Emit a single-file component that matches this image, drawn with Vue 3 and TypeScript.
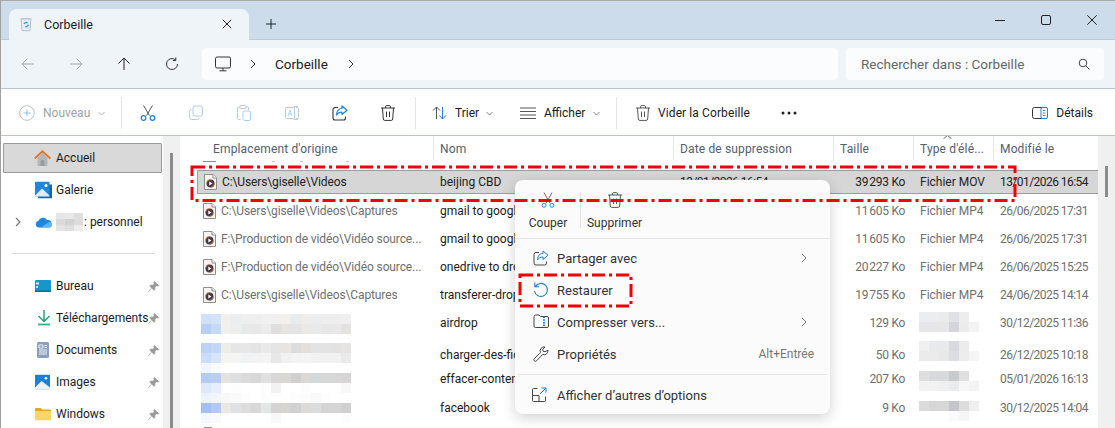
<script setup lang="ts">
interface Row { loc?: string; name: string; date: string; size: string; type?: string; mod: string; sel?: boolean }
const rows: Row[] = [
  { loc: 'C:\\Users\\giselle\\Videos', name: 'beijing CBD', date: '13/01/2026 16:54', size: '39\u202f293 Ko', type: 'Fichier MOV', mod: '13/01/2026 16:54', sel: true },
  { loc: 'C:\\Users\\giselle\\Videos\\Captures', name: 'gmail to google', date: '', size: '11\u202f605 Ko', type: 'Fichier MP4', mod: '26/06/2025 17:31' },
  { loc: 'F:\\Production de vidéo\\Vidéo source...', name: 'gmail to google', date: '', size: '11\u202f605 Ko', type: 'Fichier MP4', mod: '26/06/2025 17:31' },
  { loc: 'F:\\Production de vidéo\\Vidéo source...', name: 'onedrive to dropbox', date: '', size: '20\u202f227 Ko', type: 'Fichier MP4', mod: '26/06/2025 15:25' },
  { loc: 'C:\\Users\\giselle\\Videos\\Captures', name: 'transferer-dropbox', date: '', size: '19\u202f755 Ko', type: 'Fichier MP4', mod: '24/06/2025 14:14' },
  { name: 'airdrop', date: '', size: '129 Ko', mod: '30/12/2025 11:36' },
  { name: 'charger-des-fichiers', date: '', size: '50 Ko', mod: '26/12/2025 10:18' },
  { name: 'effacer-contenu', date: '', size: '207 Ko', mod: '05/01/2026 16:13' },
  { name: 'facebook', date: '', size: '9 Ko', mod: '30/12/2025 14:04' }
]
const w = '#ffffff'
const locBlur: { top: number; bands: string[][] }[] = [
  { top: 5, bands: [
    ['#cfe0f8','#d3e3f9','#f1f0ee','#ebedee','#efefef','#efefef','#f0f1f0','#f0f0f0','#f1f0ee','#e9ecec','#efedeb','#ecedee','#eeeeee','#eeeeee','#efefef'],
    ['#b7cff2','#c6d9f6','#f0f0ee','#eeeeee','#e8eae9','#e8e8e8','#ececec','#dfdfdf','#e5e4e2','#e4e4e4','#ebe9e7','#e9ebea','#e7e7e7','#e8e8e8','#e3e2e0'] ] },
  { top: 6, bands: [
    ['#bcd3f4','#c3d7f6','#ededeb','#e6e6e6','#e8e7e7','#e4e4e4','#e9e9e9','#e5e5e5','#e6e5e3','#dcdcdc','#e3dfdd','#e2e3e4','#e3e3e3','#e2e2e2','#e5e4e2'],
    ['#cadcf7','#d8e5f9','#f4f4f2','#f4f4f4','#f1f2f4','#f3f3f3','#f4f4f4','#e8e8e8','#f1f1f1','#f3f3f3','#f4f4f4','#f2f2f2','#f1f1f1','#f1f1f1','#eaeaea'],
    ['#f1f5fe','#f8fafe',w,w,w,w,w,w,w,w,w,w,w,w,w] ] },
  { top: 8, bands: [
    ['#b3ccf2','#b8cff3','#e4e3e0','#dddfe0','#dcdbdb','#d8d8d8','#e0e0e0','#d7d7d7','#d8d7d5','#d0d0d0','#dcd8d6','#d5d8d8','#d5d6d6','#d6d6d6','#d6d4d4'],
    ['#dee8fb','#e8effc',w,'#fdfdfd',w,w,'#fdfdfd','#f2f2f2',w,w,'#fdfdfd',w,w,w,'#f8f8f8'] ] },
  { top: 0, bands: [
    ['#edf3fa','#f2f6fb','#f8f8f8','#fafafa','#fdfdfd',w,'#fdfdfd','#fdfdfd',w,'#fdfdfd','#fcfcfc','#f9f9f9','#fdfdfd',w,w],
    ['#a3c1f0','#b2caf3','#e9e8e5','#dfe1e2','#dcdddd','#d8d8d8','#e3e6e4','#d3d3d3','#d5d4d2','#d0d0d0','#dcdad8','#dadcdc','#d4d4d4','#d4d4d4','#d0d0d0'],
    ['#f4f7fe','#f8faff',w,w,w,w,w,'#f8f8f8',w,w,w,w,w,w,'#fdfdfd'] ] }
]
const typeBlur: { top: number; bands: string[][] }[] = [
  { top: 3, bands: [['#ecedee','#ecedee','#ebebec','#dfe1e4','#ededed',w],['#e6e6e8','#e6e6e6','#e6e6e6','#d3d5d9','#ececec','#f3f3f3']] },
  { top: 4, bands: [['#f0f0f0','#e8e9ea','#e8e9ea','#d8dadd','#ececec',w],['#ebebeb','#ebebeb','#e8e8e8','#dcdee1','#ededed','#f5f5f5']] },
  { top: 6, bands: [['#dfdfe0','#d8d9da','#d8d9da','#c8cbce','#e0e0e0',w],['#f2f2f2','#f1f1f1','#efefef','#e9ebec','#f7f7f7','#f3f3f3']] },
  { top: 8, bands: [['#dbdbdc','#d6d6d7','#d6d6d7','#c2c5ca','#dcdcdc','#efefef'],[w,w,w,'#fafafa','#f5f5f5',w]] }
]
const oneDrive = ['#e6e6e6','#e8e8e8','#dedede','#dadada','#d2d2d2','#dcdcdc','#e4e4e4','#dedede','#ececec']
const pinned = [
  { label: 'Bureau', kind: 'desk' }, { label: 'Téléchargements', kind: 'dl' },
  { label: 'Documents', kind: 'doc' }, { label: 'Images', kind: 'img' }, { label: 'Windows', kind: 'folder' }
]
</script>

<template>
  <div class="win">
    <!-- tab bar -->
    <div class="tabbar">
      <div class="tab">
        <svg class="ti" width="16" height="16" viewBox="0 0 16 16"><path d="M3 2.500h10l-1 12.200H4z" fill="#e6edf2" stroke="#a9b4bc" stroke-width=".8"/><path d="M3 2.500h10v1.400H3z" fill="#c9d3da"/><path d="M6 8a2.300 2.300 0 0 1 3.600-1M10.300 8.600a2.300 2.300 0 0 1-3 2" fill="none" stroke="#2a9fd8" stroke-width="1.300"/></svg>
        <span class="tabtxt">Corbeille</span>
        <svg class="tabx" width="10" height="10" viewBox="0 0 10 10"><path d="M.8.800l8.400 8.400M9.200.8L.8 9.200" stroke="#222" stroke-width="1"/></svg>
      </div>
      <svg class="plus" width="10" height="10" viewBox="0 0 10 10"><path d="M5 0v10M0 5h10" stroke="#222" stroke-width="1"/></svg>
      <div class="wctrl">
        <svg width="10" height="10" viewBox="0 0 10 10"><path d="M0 5.500h10" stroke="#222" stroke-width="1"/></svg>
        <svg width="10" height="10" viewBox="0 0 10 10"><rect x=".5" y=".5" width="9" height="9" rx="1.500" fill="none" stroke="#222"/></svg>
        <svg width="10" height="10" viewBox="0 0 10 10"><path d="M.3.300l9.400 9.400M9.700.3L.3 9.700" stroke="#222" stroke-width="1"/></svg>
      </div>
    </div>
    <!-- nav -->
    <div class="nav">
      <div class="navbtn"><svg width="14" height="14" viewBox="0 0 14 14"><path d="M13 7H1M6.500 1.500L1 7l5.500 5.500" fill="none" stroke="#a0a6ab" stroke-width="1"/></svg></div>
      <div class="navbtn"><svg width="14" height="14" viewBox="0 0 14 14"><path d="M1 7h12M7.500 1.500L13 7l-5.500 5.500" fill="none" stroke="#a0a6ab" stroke-width="1"/></svg></div>
      <div class="navbtn"><svg width="14" height="14" viewBox="0 0 14 14"><path d="M7 13V1M1.500 6.500L7 1l5.500 5.500" fill="none" stroke="#222" stroke-width="1"/></svg></div>
      <div class="navbtn"><svg width="14" height="14" viewBox="0 0 14 14"><path d="M12.500 7A5.500 5.500 0 1 1 10.500 2.800M10.800 .5v3h-3" fill="none" stroke="#333" stroke-width="1"/></svg></div>
      <div class="addr">
        <svg class="mon" width="16" height="16" viewBox="0 0 16 16"><rect x=".5" y="1" width="15" height="11" rx="1.500" fill="none" stroke="#333"/><path d="M8 12v2.500M4.500 14.800h7" stroke="#333"/></svg>
        <svg class="chev1" width="6" height="10" viewBox="0 0 6 10"><path d="M1 1l4 4-4 4" fill="none" stroke="#333"/></svg>
        <span class="crumb">Corbeille</span>
        <svg class="chev2" width="6" height="10" viewBox="0 0 6 10"><path d="M1 1l4 4-4 4" fill="none" stroke="#333"/></svg>
      </div>
      <div class="search">
        <span>Rechercher dans : Corbeille</span>
        <svg width="12" height="12" viewBox="0 0 12 12"><circle cx="5" cy="5" r="3.800" fill="none" stroke="#444"/><path d="M7.800 7.800L11.500 11.500" stroke="#444"/></svg>
      </div>
    </div>
    <!-- toolbar -->
    <div class="tools">
      <div class="newbtn">
        <svg width="16" height="16" viewBox="0 0 16 16"><circle cx="8" cy="8" r="7.300" fill="none" stroke="#b9c0c6"/><path d="M8 4.500v7M4.500 8h7" stroke="#8fc1ea"/></svg>
        <span class="dis">Nouveau</span>
        <svg class="cv" width="7" height="5" viewBox="0 0 7 5"><path d="M.5 1l3 3 3-3" fill="none" stroke="#b5b5b5"/></svg>
      </div>
      <i class="vsep first"></i>
      <div class="ib"><svg width="16" height="16" viewBox="0 0 16 16"><path d="M3.500 .5l6 10M12.500 .5l-6 10" stroke="#555" fill="none"/><circle cx="3.500" cy="13" r="2.300" fill="none" stroke="#1f7fd6" stroke-width="1.200"/><circle cx="12.500" cy="13" r="2.300" fill="none" stroke="#1f7fd6" stroke-width="1.200"/></svg></div>
      <div class="ib"><svg width="16" height="16" viewBox="0 0 16 16"><rect x="5" y="1" width="9.500" height="10" rx="2" fill="none" stroke="#a9cfee"/><path d="M3.500 4.500A2 2 0 0 0 1.500 6.500v6a2 2 0 0 0 2 2h6a2 2 0 0 0 1.800-1.500" fill="none" stroke="#c3c8cc"/></svg></div>
      <div class="ib"><svg width="16" height="16" viewBox="0 0 16 16"><path d="M4.500 14.500h-2a1 1 0 0 1-1-1V3a1 1 0 0 1 1-1h9a1 1 0 0 1 1 1v2" fill="none" stroke="#c3c8cc"/><rect x="4" y=".5" width="6" height="3" rx="1" fill="#fff" stroke="#c3c8cc"/><rect x="7" y="6" width="7.500" height="9.500" rx="1.500" fill="#fff" stroke="#a9cfee"/></svg></div>
      <div class="ib"><svg width="16" height="14" viewBox="0 0 16 14"><path d="M9 1.500H2.500a1 1 0 0 0-1 1v9a1 1 0 0 0 1 1H9M12 1.500h1.500a1 1 0 0 1 1 1v9a1 1 0 0 1-1 1H12" fill="none" stroke="#c3c8cc"/><path d="M4 10l2-6 2 6M4.800 8h2.400M9 .5h5M9 13.500h5M10.500 .5v13" fill="none" stroke="#a9cfee" stroke-width=".9"/></svg></div>
      <div class="ib"><svg width="16" height="16" viewBox="0 0 16 16"><path d="M6 2.500H3a2 2 0 0 0-2 2v8.500a2 2 0 0 0 2 2h8.500a2 2 0 0 0 2-2v-1.500" fill="none" stroke="#333" stroke-width="1.100"/><path d="M10 1v2.500C6.500 3.500 4.800 5.800 4.500 10c1.500-2.300 3.200-3 5.500-3v2.500L15 5.200z" fill="none" stroke="#1f7fd6" stroke-width="1.200" stroke-linejoin="round"/></svg></div>
      <div class="ib"><svg width="14" height="16" viewBox="0 0 14 16"><path d="M0 3h14M4.500 3V1.800A1.200 1.200 0 0 1 5.700.6h2.600a1.200 1.200 0 0 1 1.200 1.200V3M1.500 3l.8 11a1.500 1.500 0 0 0 1.500 1.400h6.400a1.500 1.500 0 0 0 1.500-1.400l.8-11M5.500 6.500v5.500M8.500 6.500v5.500" fill="none" stroke="#333" stroke-width="1"/></svg></div>
      <i class="vsep second"></i>
      <div class="tb sort">
        <svg width="16" height="16" viewBox="0 0 16 16"><path d="M4.500 14V2M1 5.500L4.500 2 8 5.500" fill="none" stroke="#555"/><path d="M10.500 2v12M7.500 10.500l3 3.500 3.500-3.500" fill="none" stroke="#1f7fd6"/></svg>
        <span>Trier</span>
        <svg class="cv" width="7" height="5" viewBox="0 0 7 5"><path d="M.5 1l3 3 3-3" fill="none" stroke="#888"/></svg>
      </div>
      <div class="tb view">
        <svg width="16" height="12" viewBox="0 0 16 12"><path d="M0 1h16M0 4.500h16M0 8h16M0 11.500h16" stroke="#444" stroke-width=".9"/></svg>
        <span>Afficher</span>
        <svg class="cv" width="7" height="5" viewBox="0 0 7 5"><path d="M.5 1l3 3 3-3" fill="none" stroke="#888"/></svg>
      </div>
      <i class="vsep third"></i>
      <div class="tb empty">
        <svg width="14" height="16" viewBox="0 0 14 16"><path d="M0 3h14M4.500 3V1.800A1.200 1.200 0 0 1 5.700.6h2.600a1.200 1.200 0 0 1 1.200 1.200V3M1.500 3l.8 11a1.500 1.500 0 0 0 1.500 1.400h6.400a1.500 1.500 0 0 0 1.500-1.400l.8-11M5.500 6.500v5.500M8.500 6.500v5.500" fill="none" stroke="#444" stroke-width=".9"/></svg>
        <span>Vider la Corbeille</span>
      </div>
      <svg class="more" width="16" height="4" viewBox="0 0 16 4"><circle cx="2" cy="2" r="1.500" fill="#222"/><circle cx="8" cy="2" r="1.500" fill="#222"/><circle cx="14" cy="2" r="1.500" fill="#222"/></svg>
      <div class="tb det">
        <svg width="16" height="14" viewBox="0 0 16 14"><rect x=".5" y="1.500" width="15" height="11" rx="2" fill="none" stroke="#333"/><rect x="9" y="1.500" width="6.500" height="11" rx="1.500" fill="#fff" stroke="#1f7fd6"/><path d="M11 4.500h2.500M11 7h2.500M11 9.500h2.500" stroke="#1f7fd6" stroke-width=".9"/></svg>
        <span>Détails</span>
      </div>
    </div>
    <!-- body -->
    <div class="body">
      <aside class="side">
        <div class="sitem selected">
          <svg class="si" width="17" height="16" viewBox="0 0 17 16"><path d="M3.500 8v8h10V8l-5-5z" fill="#b4b6b8"/><path d="M6.500 16v-4a2 2 0 0 1 4 0v4z" fill="#97999c"/><path d="M.7 8.500L8.500 1.300l7.800 7.200" fill="none" stroke="#e0762a" stroke-width="1.800"/></svg>
          <span>Accueil</span>
        </div>
        <div class="sitem">
          <svg class="si" width="17" height="17" viewBox="0 0 17 17"><rect x="3" y="3" width="14" height="14" fill="#1565a8"/><rect x="0" y="0" width="14.500" height="15" rx="1" fill="#1f86d8"/><path d="M0 14l7-7 7.500 7v1H0z" fill="#dcebf7"/><circle cx="11" cy="4" r="1.500" fill="#fff"/></svg>
          <span>Galerie</span>
        </div>
        <div class="sitem">
          <svg class="exp" width="6" height="10" viewBox="0 0 6 10"><path d="M1 1l4 4-4 4" fill="none" stroke="#777" stroke-width="1.200"/></svg>
          <svg class="si od" width="17" height="12" viewBox="0 0 17 12"><path d="M4 11.500a3.400 3.400 0 0 1-.6-6.700A4.800 4.800 0 0 1 12 4a3.800 3.800 0 0 1 1.500 7.500z" fill="#1f86e0"/><path d="M6 11.500L14 6a3 3 0 0 1 1.500 5.500z" fill="#5cb5f5"/></svg>
          <div class="odblur"><i v-for="(c, i) in oneDrive" :key="i" :style="{ background: c }"></i></div>
          <span>: personnel</span>
        </div>
        <hr class="sdiv" />
        <div v-for="p in pinned" :key="p.label" class="sitem">
          <svg v-if="p.kind === 'desk'" class="si" width="16" height="12" viewBox="0 0 16 12"><rect width="16" height="12" rx="1" fill="#1797c9"/><rect x="1" y="2.500" width="3" height="2" fill="#d8f0fa"/><rect x="1" y="6" width="2" height="2" fill="#bde6f5"/><rect y="10.500" width="16" height="1.500" fill="#0d6c99"/></svg>
          <svg v-else-if="p.kind === 'dl'" class="si dl" width="14" height="16" viewBox="0 0 14 16"><path d="M7 0v11M1.500 6L7 11.500 12.500 6" fill="none" stroke="#1ea67f" stroke-width="1.500"/><path d="M1 14.500h12" stroke="#28b78c" stroke-width="1.800"/></svg>
          <svg v-else-if="p.kind === 'doc'" class="si dl" width="12" height="16" viewBox="0 0 12 16"><rect width="12" height="16" rx="1.500" fill="#8b9fbc"/><path d="M2 3h4v3H2zM7.500 3.500H10M7.500 5.500H10M2 8h8M2 10h8M2 12h8" stroke="#eef2f8" fill="none"/></svg>
          <svg v-else-if="p.kind === 'img'" class="si" width="15" height="15" viewBox="0 0 15 15"><rect width="15" height="15" rx="1" fill="#1f7fd0"/><path d="M0 13l6.500-6.500L15 13v2H0z" fill="#e7f2fb"/><circle cx="11" cy="3.800" r="1.300" fill="#fff"/></svg>
          <svg v-else class="si" width="16" height="13" viewBox="0 0 16 13"><path d="M0 1.500A1 1 0 0 1 1 .5h4.500L7.500 2H15a1 1 0 0 1 1 1v1H0z" fill="#e8a80f"/><path d="M0 3.500h16V12a1 1 0 0 1-1 1H1a1 1 0 0 1-1-1z" fill="#fbd568"/></svg>
          <span>{{ p.label }}</span>
          <svg class="pin" width="11" height="11" viewBox="0 0 11 11"><path d="M6.500.5l4 4-1.200.6-.8-.4L6.800 6.500 7 8.300 6 9.300 1.700 5 2.700 4l1.800.2L6.300 2.500l-.4-.8zM3 7.500L.5 10.500" fill="#9a9a9a" stroke="#9a9a9a" stroke-width=".8"/></svg>
        </div>
      </aside>
      <div class="sidebar-scroll"><b></b></div>
      <main class="list">
        <div class="head">
          <span class="hcell first">Emplacement d'origine</span>
          <span class="hcell">Nom</span>
          <span class="hcell">Date de suppression</span>
          <span class="hcell">Taille</span>
          <span class="hcell sorted">Type d'élé...<svg class="caret" width="9" height="4" viewBox="0 0 9 4"><path d="M.5 3.800L4.500.5l4 3.300" fill="none" stroke="#666"/></svg></span>
          <span class="hcell">Modifié le</span>
        </div>
        <div class="ghost"><i class="g1"></i><i class="g2"></i><i class="g3"></i><i class="g4"></i></div>
        <div v-for="(r, i) in rows" :key="i" class="row" :class="{ sel: r.sel }">
          <div class="cell c0">
            <template v-if="r.loc">
              <svg class="file" width="13" height="16" viewBox="0 0 13 16"><path d="M.5.500h8.500l3.500 3.500v11.500H.5z" fill="#f6f4f4" stroke="#8c8c8c"/><path d="M9 .5V4h3.500" fill="#fff" stroke="#8c8c8c"/><circle cx="6.500" cy="9.500" r="4" fill="#4a3748"/><circle cx="6.500" cy="9.500" r="4" fill="none" stroke="#d98b2a" stroke-width=".8" stroke-dasharray="6 7"/><path d="M5.300 7.600l3.200 1.900-3.200 1.900z" fill="#fff"/></svg>
              <span class="tx">{{ r.loc }}</span>
            </template>
            <div v-else class="blur" :style="{ marginTop: locBlur[i - 5].top + 'px' }">
              <div v-for="(b, j) in locBlur[i - 5].bands" :key="j" class="band"><i v-for="(c, k) in b" :key="k" :style="{ background: c }"></i></div>
            </div>
          </div>
          <div class="cell c1"><span>{{ r.name }}</span></div>
          <div class="cell c2"><span class="tx">{{ r.date }}</span></div>
          <div class="cell c3"><span class="tx">{{ r.size }}</span></div>
          <div class="cell c4">
            <span v-if="r.type" class="tx">{{ r.type }}</span>
            <div v-else class="blur" :style="{ marginTop: typeBlur[i - 5].top + 'px' }">
              <div v-for="(b, j) in typeBlur[i - 5].bands" :key="j" class="band"><i v-for="(c, k) in b" :key="k" :style="{ background: c }"></i></div>
            </div>
          </div>
          <div class="cell c5"><span class="tx">{{ r.mod }}</span></div>
        </div>
        <i class="nextblue"></i>
      </main>
      <div class="vscroll"><b></b></div>
    </div>

    <!-- context menu -->
    <div class="menu">
      <div class="mtop">
        <div class="mbtn couper">
          <svg width="14" height="16" viewBox="0 0 16 18"><path d="M3.500 .5l6.500 12M12.500 .5l-6.500 12" stroke="#555" fill="none"/><circle cx="3.500" cy="15" r="2.300" fill="none" stroke="#1f7fd6" stroke-width="1.100"/><circle cx="12.500" cy="15" r="2.300" fill="none" stroke="#1f7fd6" stroke-width="1.100"/></svg>
          <span>Couper</span>
        </div>
        <i class="msep"></i>
        <div class="mbtn suppr">
          <svg width="14" height="16" viewBox="0 0 14 16"><path d="M0 3h14M4.500 3V1.800A1.200 1.200 0 0 1 5.700.6h2.600a1.200 1.200 0 0 1 1.200 1.200V3M1.500 3l.8 11a1.500 1.500 0 0 0 1.500 1.400h6.400a1.500 1.500 0 0 0 1.500-1.400l.8-11M5.500 6.500v5.500M8.500 6.500v5.500" fill="none" stroke="#444" stroke-width=".9"/></svg>
          <span>Supprimer</span>
        </div>
      </div>
      <div class="mlist">
        <div class="mi">
          <svg width="16" height="16" viewBox="0 0 16 16"><path d="M6 2.500H3a2 2 0 0 0-2 2v8.500a2 2 0 0 0 2 2h8.500a2 2 0 0 0 2-2v-1.500" fill="none" stroke="#444"/><path d="M10 1v2.500C6.500 3.500 4.800 5.800 4.500 10c1.500-2.300 3.200-3 5.500-3v2.500L15 5.200z" fill="none" stroke="#1f7fd6" stroke-linejoin="round"/></svg>
          <span>Partager avec</span>
          <svg class="mchev" width="6" height="10" viewBox="0 0 6 10"><path d="M1 1l4 4-4 4" fill="none" stroke="#777"/></svg>
        </div>
        <div class="mi">
          <svg width="16" height="16" viewBox="0 0 16 16"><path d="M2.300 4.600A6.500 6.500 0 1 1 1.500 9M1.800 .5v4.300h4.300" fill="none" stroke="#1f7fd6" stroke-width="1.100"/></svg>
          <span>Restaurer</span>
        </div>
        <div class="mi">
          <svg width="16" height="14" viewBox="0 0 16 14"><path d="M1 2.500A1.500 1.500 0 0 1 2.500 1h3.500l1.500 1.500H14a1.500 1.500 0 0 1 1.500 1.500v8A1.500 1.500 0 0 1 14 13.500H2.500A1.500 1.500 0 0 1 1 12z" fill="none" stroke="#444"/><path d="M11 2.500v11" stroke="#1f7fd6" stroke-width="2" stroke-dasharray="1.500 1.200"/></svg>
          <span>Compresser vers...</span>
          <svg class="mchev" width="6" height="10" viewBox="0 0 6 10"><path d="M1 1l4 4-4 4" fill="none" stroke="#777"/></svg>
        </div>
        <div class="mi">
          <svg width="16" height="16" viewBox="0 0 16 16"><path d="M15 4.200a4 4 0 0 1-5.500 4.300L3.700 14.700a1.500 1.500 0 0 1-2.400-2.200L7.500 6.600A4 4 0 0 1 12 1l-2.200 2.300.3 2 2 .4z" fill="none" stroke="#444" stroke-linejoin="round"/></svg>
          <span>Propriétés</span>
          <em>Alt+Entrée</em>
        </div>
      </div>
      <div class="mfoot mi">
        <svg width="16" height="16" viewBox="0 0 16 16"><path d="M6.500 1.500H2.500a1 1 0 0 0-1 1v11a1 1 0 0 0 1 1h11a1 1 0 0 0 1-1v-4M1.500 8.500h6.500v6" fill="none" stroke="#444"/><path d="M9 7l6-6M10.500 1H15v4.500" fill="none" stroke="#1f7fd6"/></svg>
        <span>Afficher d’autres d’options</span>
      </div>
    </div>

    <!-- red annotations -->
    <svg class="marks" width="1115" height="428" viewBox="0 0 1115 428">
      <rect x="192" y="167" width="823" height="33.500" />
      <rect x="520" y="275" width="111" height="31" />
    </svg>
  </div>
</template>

<style scoped>
.win { position: relative; width: 1115px; height: 428px; overflow: hidden; display: flex; flex-direction: column; background: #fff; font-family: Roboto, "Noto Sans", sans-serif; font-size: 12px; color: #1b1b1b; border-top: 1px solid #a8a8a8; border-left: 1px solid #a0a0a0; box-sizing: border-box; }
.tabbar { height: 39px; flex: none; background: #cddcea; box-shadow: inset 0 -1px 0 #bccbd8; display: flex; align-items: flex-end; padding-left: 8px; position: relative; }
.tab { width: 240px; height: 31px; background: #eff4f9; border-radius: 8px 8px 0 0; display: flex; align-items: center; padding-left: 9px; box-sizing: border-box; padding-bottom: 1px; flex: none; }
.ti { flex: none; }
.tabtxt { margin-left: 10px; flex: 1; font-size: 12.500px; }
.tabx { margin-right: 17px; }
.plus { margin-left: 17px; margin-bottom: 11px; flex: none; }
.wctrl { margin-left: auto; display: flex; height: 100%; align-items: center; gap: 36px; padding-bottom: 2px; box-sizing: border-box; padding-right: 18px; }
.wctrl svg { flex: none; }
.nav { height: 48px; flex: none; background: #eff4f9; border-bottom: 1px solid #b9c6d2; display: flex; align-items: center; padding-left: 3px; }
.navbtn { width: 48px; display: flex; justify-content: center; flex: none; }
.addr { margin-left: 6px; width: 636px; height: 32px; border-radius: 4px; background: #fafcfe; display: flex; align-items: center; box-sizing: border-box; padding-left: 13px; font-size: 13.500px; flex: none; }
.chev1 { margin-left: 19px; }
.crumb { margin-left: 19px; width: 70px; }
.chev2 { margin-left: 3px; }
.search { margin-left: 8px; width: 258px; height: 32px; border-radius: 4px; background: #fafcfe; display: flex; align-items: center; justify-content: space-between; padding: 0 14px 0 15px; box-sizing: border-box; color: #666; font-size: 13.500px; flex: none; }
.tools { height: 44px; padding-top: 2px; flex: none; display: flex; align-items: center; border-bottom: 1px solid #b9c6d2; }
.newbtn { margin-left: 18px; display: flex; align-items: center; gap: 8px; width: 102px; flex: none; }
.dis { color: #9f9f9f; }
.cv { flex: none; }
.vsep { width: 1px; height: 32px; background: #e5e5e5; flex: none; display: block; }
.ib { width: 48px; display: flex; justify-content: center; flex: none; }
.vsep.first { margin-right: 2px; }
.vsep.second { margin-left: 3px; }
.tb { display: flex; align-items: center; flex: none; white-space: nowrap; }
.sort { margin-left: 16px; gap: 7px; width: 80px; }
.view { margin-left: 8px; gap: 8px; width: 96px; }
.vsep.third { margin-left: 0; }
.empty { margin-left: 19px; gap: 8px; width: 145px; }
.empty span { letter-spacing: .1px; }
.more { margin-left: 0; flex: none; }
.det { margin-left: auto; margin-right: 22px; gap: 8px; }
.body { flex: 1; display: flex; min-height: 0; }
.side { width: 162px; flex: none; padding-top: 7px; padding-left: 2px; box-sizing: border-box; }
.sitem { height: 32px; display: flex; align-items: center; position: relative; padding-left: 53px; box-sizing: border-box; width: 159px; white-space: nowrap; }
.sitem.selected { height: 30px; margin-bottom: 1px; background: #d9d9d9; border: 1px solid #9a9a9a; border-radius: 1px; padding-left: 52px; }
.si { position: absolute; left: 32px; top: 50%; transform: translateY(-50%); }
.si.dl { left: 34px; }
.selected .si { left: 30px; }
.exp { position: absolute; left: 12px; top: 11px; }
.od { left: 32px; }
.odblur { display: grid; grid-template-columns: repeat(3, 9px); grid-auto-rows: 6px; margin-right: 1px; }
.odblur i { display: block; }
.sdiv { border: 0; border-top: 1px solid #d9d9d9; margin: 15px 0 16px 9px; width: 143px; }
.pin { position: absolute; right: 3px; top: 11px; }
.sidebar-scroll { width: 17px; flex: none; background: #f0f0f0; display: flex; justify-content: center; }
.sidebar-scroll b { width: 3px; background: #8c8c8c; margin-top: 17px; margin-right: 1px; display: block; }
.list { flex: 1; min-width: 0; overflow: hidden; position: relative; }
.head { height: 25px; display: grid; grid-template-columns: 254px 240px 160px 80px 80px 105px; align-items: center; color: #52606d; letter-spacing: .15px; }
.hcell { height: 25px; line-height: 26px; border-right: 1px solid #e8e8e8; padding-left: 6px; box-sizing: border-box; position: relative; white-space: nowrap; overflow: visible; }
.hcell.first { padding-left: 33px; }
.hcell:last-child { border-right: 0; }
.caret { position: absolute; left: 29px; top: -1px; }
.ghost { height: 9px; position: relative; }
.ghost i { height: 1px; background: #8a8a8a; display: block; position: absolute; top: 0; }
.g1 { width: 13px; left: 23px; }
.g2 { width: 3px; left: 92px; opacity: .5; }
.g3 { width: 3px; left: 120px; opacity: .5; }
.g4 { width: 3px; left: 166px; opacity: .5; }
.row { height: 28px; margin-left: 17px; display: grid; grid-template-columns: 236px 240px 160px 80px 80px 105px; align-items: center; white-space: nowrap; box-sizing: border-box; }
.row.sel { height: 24px; margin: 0 0 3px 17px; background: #d6d6d6; border: 1px solid #9c9c9c; border-right: 0; color: #1b1b1b; grid-template-columns: 235px 240px 160px 80px 80px 105px; }
.row.sel .tx { color: #222; }
.cell { display: flex; align-items: center; height: 100%; min-width: 0; }
.tx { color: #6f6f6f; }
.c0 { padding-left: 6px; gap: 5px; }
.c0 .tx { letter-spacing: -.12px; }
.c1 { padding-left: 7px; }
.c2 { padding-left: 7px; }
.c2 .tx, .c5 .tx { letter-spacing: -.55px; }
.c3 { justify-content: flex-end; padding-right: 8px; }
.c3 .tx { letter-spacing: -.3px; }
.c4 { padding-left: 7px; }
.c5 { padding-left: 7px; }
.file { flex: none; }
.blur { align-self: flex-start; }
.c0 .blur { margin-left: -2px; }
.c4 .blur { margin-left: -1px; }
.band { display: flex; height: 10px; }
.band i { width: 10px; height: 10px; display: block; flex: none; }
.nextblue { display: block; width: 8px; height: 3px; background: #6f9fe0; margin: 6px 0 0 24px; }
.vscroll { width: 17px; flex: none; background: #f0f0f0; }
.vscroll b { display: block; width: 3px; height: 31px; background: #8c8c8c; margin: 30px 0 0 7px; }
.menu { position: absolute; left: 514px; top: 179px; width: 315px; height: 234px; background: #fbfbfb; border-radius: 8px; box-shadow: 0 4px 14px rgba(0,0,0,.18); display: flex; flex-direction: column; color: #333; font-size: 13px; }
.mtop { height: 58px; flex: none; display: flex; border-bottom: 1px solid #e6e6e6; padding-left: 13px; }
.mbtn { display: flex; flex-direction: column; align-items: center; justify-content: flex-start; padding-top: 12px; gap: 8px; font-size: 12px; height: 58px; box-sizing: border-box; }
.mbtn svg { flex: none; }
.couper { width: 40px; }
.suppr { width: 57px; }
.msep { width: 1px; height: 36px; margin: 12px 5px 0 12px; background: #e5e5e5; display: block; }
.mlist { padding-top: 3px; flex: none; height: 136px; border-bottom: 1px solid #e6e6e6; margin: 0 3px; box-sizing: border-box; }
.mi { height: 32px; display: flex; align-items: center; position: relative; padding-left: 39px; }
.mi > svg:first-child { position: absolute; left: 15px; top: 8px; }
.mfoot { margin-top: 4px; padding-left: 42px; }
.mfoot > svg:first-child { left: 16px; }
.mchev { position: absolute; right: 20px; top: 11px; }
.mi em { position: absolute; right: 13px; font-style: normal; font-size: 12px; color: #777; }
.marks { position: absolute; left: -1px; top: -1px; pointer-events: none; }
.marks rect { fill: none; stroke: #f00000; stroke-width: 3; stroke-dasharray: 13 4 3 4; }
</style>
